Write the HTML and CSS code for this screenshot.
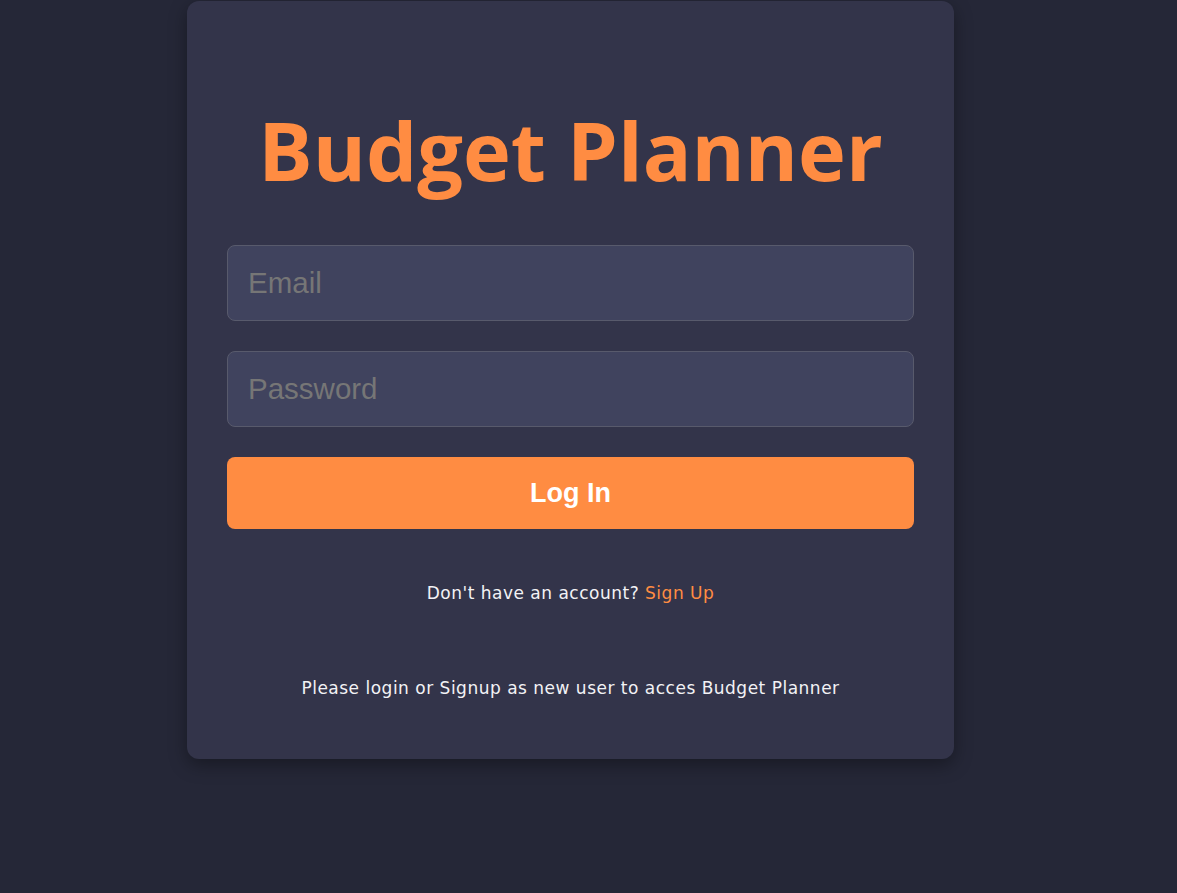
FILE: index.html
```html
<!DOCTYPE html>
<html lang="en">
<head>
<meta charset="utf-8">
<title>Budget Planner - Login</title>
<link rel="stylesheet" href="styles.css">
</head>
<body>
<main class="page">
  <section class="card">
    <h1 class="title">Budget Planner</h1>
    <form class="form">
      <input class="field" type="email" placeholder="Email">
      <input class="field" type="password" placeholder="Password">
      <button class="btn" type="button">Log In</button>
    </form>
    <p class="switch">Don't have an account? <a class="link" href="#">Sign Up</a></p>
    <p class="note">Please login or Signup as new user to acces Budget Planner</p>
  </section>
</main>
</body>
</html>
```

FILE: styles.css
```css
html, body {
  margin: 0;
  padding: 0;
  background: #252737;
  height: 100%;
}
body {
  font-family: "DejaVu Sans", "Open Sans", sans-serif;
}
.page {
  display: flex;
  justify-content: center;
  padding: 1px 36px 0 0;
}
.card {
  width: 767px;
  box-sizing: border-box;
  padding: 94px 40px 59px;
  background: #33344a;
  border-radius: 12px;
  box-shadow: 0 6px 18px rgba(0, 0, 0, 0.35);
  text-align: center;
}
.title {
  margin: 0 0 40px;
  font-family: "Open Sans", sans-serif;
  font-weight: 700;
  font-size: 81px;
  line-height: 110px;
  color: #ff8c42;
  letter-spacing: 0;
}
.form {
  display: flex;
  flex-direction: column;
  gap: 30px;
}
.field {
  display: block;
  width: 100%;
  box-sizing: border-box;
  height: 76px;
  padding: 0 20px;
  background: #40435e;
  border: 1px solid #585a6c;
  border-radius: 8px;
  font-family: "Liberation Sans", Arial, sans-serif;
  font-size: 29.5px;
  color: #ddd;
  outline: none;
}
.field::placeholder {
  color: #767676;
}
.btn {
  height: 72px;
  border: none;
  border-radius: 8px;
  background: #ff8c42;
  color: #fff;
  font-family: "Liberation Sans", Arial, sans-serif;
  font-weight: 700;
  font-size: 27px;
  cursor: pointer;
}
.switch, .note {
  margin: 0;
  font-size: 17px;
  line-height: 24px;
  letter-spacing: 0.5px;
  color: #f2f2f5;
}
.switch {
  margin-top: 52px;
}
.note {
  margin-top: 71px;
}
.link {
  color: #ff8c42;
  text-decoration: none;
}
```
